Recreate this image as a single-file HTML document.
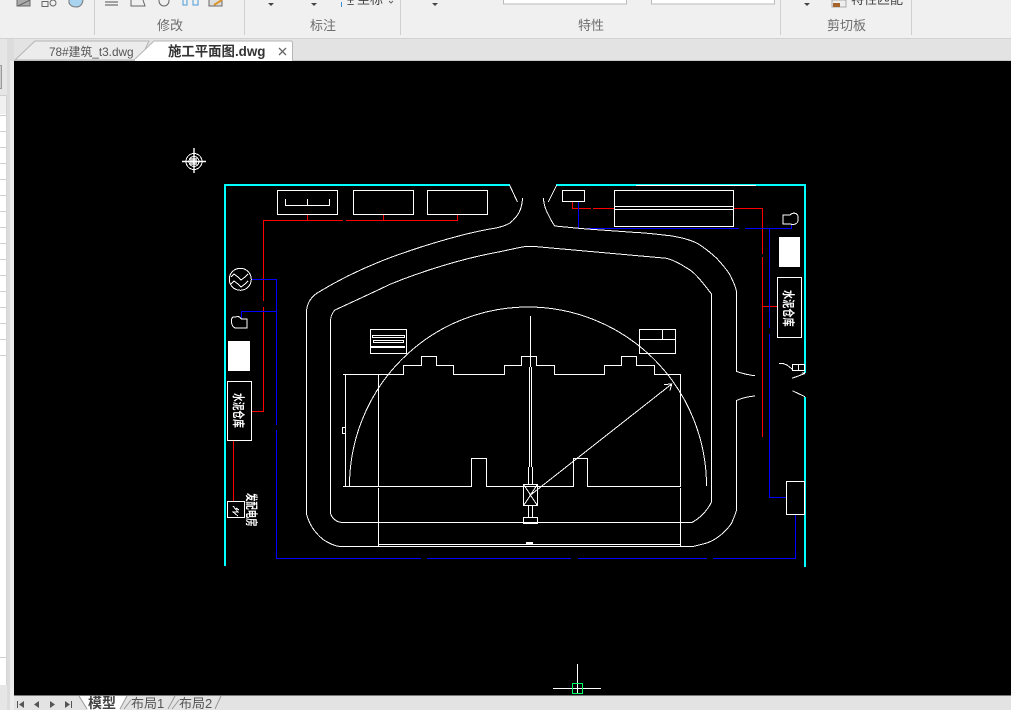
<!DOCTYPE html>
<html><head><meta charset="utf-8">
<style>
html,body{margin:0;padding:0;width:1011px;height:710px;overflow:hidden;background:#f0f0f0}
svg{display:block;position:absolute;left:0;top:0}
text{font-family:"Liberation Sans","Noto Sans CJK SC",sans-serif}
</style></head><body>
<svg width="1011" height="710" viewBox="0 0 1011 710" xmlns="http://www.w3.org/2000/svg">
<!-- ribbon -->
<rect width="1011" height="38" fill="#f0f0f0"/>
<rect y="38" width="1011" height="1" fill="#d2d2d2"/>
<rect y="39" width="1011" height="21" fill="#e3e3e3"/>
<rect y="60" width="1011" height="1" fill="#c8c8c8"/>
<g fill="#cfcfcf">
<rect x="94" y="0" width="1" height="35"/><rect x="244" y="0" width="1" height="35"/><rect x="400" y="0" width="1" height="35"/><rect x="780" y="0" width="1" height="35"/><rect x="911" y="0" width="1" height="35"/>
</g>
<!-- cut-off ribbon icons -->
<g fill="none" stroke="#666" stroke-width="1">
<path d="M17 0V6H30V0" fill="#aaa"/><path d="M18 6L30 0"/>
<rect x="42" y="1.500" width="6" height="5"/><circle cx="53" cy="3" r="3"/>
<path d="M69 0V3Q71 7 76 7Q82 7 83 0" fill="#a8d4f0" stroke="#777"/>
<path d="M105 2H118M105 5H118" stroke="#555"/><path d="M131 0V6H145L143 0"/><circle cx="164" cy="1" r="5"/>
<path d="M183 0V5H187V0M193 0V5H198V0" stroke="#4a9ad8"/>
<rect x="209" y="-2" width="13" height="8" fill="#ddd"/><path d="M214 5L222 0" stroke="#d9942c" stroke-width="2"/>
</g>
<g fill="#444">
<path d="M268 3h6l-3 3z"/><path d="M311 3h6l-3 3z"/><path d="M432 3h6l-3 3z"/><path d="M804 3h6l-3 3z"/>
</g>
<path d="M341 2h1v5h-1zM341 -1h1v1h-1z" fill="#3b8ed0"/>
<text x="347" y="5" font-size="13" fill="#444">±</text>
<text x="357" y="4" font-size="13" fill="#444">坐标</text>
<path d="M389 1l2 2 2-2" fill="none" stroke="#666"/>
<rect x="503.500" y="-3" width="123" height="7" fill="#fff" stroke="#bbb"/>
<rect x="651.500" y="-3" width="123" height="7" fill="#fff" stroke="#bbb"/>
<rect x="832" y="0" width="14" height="7" fill="#eee" stroke="#aaa"/>
<rect x="833" y="3" width="7" height="4" fill="#a5642a"/>
<text x="851" y="4" font-size="13" fill="#444">特性匹配</text>
<g font-size="13" fill="#6d6d6d">
<text x="157" y="30">修改</text><text x="310" y="30">标注</text><text x="578" y="30">特性</text><text x="827" y="30">剪切板</text>
</g>
<!-- tabs -->
<path d="M15 60L35 41H149L140 60Z" fill="#ececec" stroke="#b5b5b5"/>
<path d="M134 60L154 41H291Q292.500 41 292.500 43V60Z" fill="#fff" stroke="#b5b5b5"/>
<rect x="135" y="59" width="157" height="2" fill="#fff"/>
<text x="49" y="56" font-size="11.800" fill="#555">78#建筑_t3.dwg</text>
<text x="168" y="56" font-size="13.400" font-weight="bold" fill="#333">施工平面图.dwg</text>
<path d="M279 48L286 55M286 48L279 55" stroke="#666" stroke-width="1.300"/>
<!-- left panel -->
<rect y="39" width="14" height="671" fill="#e6e6e6"/>
<rect x="7" y="39" width="7" height="671" fill="#dcdcdc"/>
<rect x="10" y="61" width="4" height="649" fill="#ececec"/>
<rect x="0" y="65.500" width="1.500" height="23" fill="#fff" stroke="#999"/>
<rect x="0" y="95" width="7" height="590" fill="#fff"/>
<rect x="0" y="96" width="7" height="18" fill="#f0f0f0"/>
<g fill="#cfcfcf">
<rect x="0" y="95" width="7" height="1"/><rect x="0" y="115" width="7" height="1"/><rect x="0" y="131" width="7" height="1"/><rect x="0" y="147" width="7" height="1"/><rect x="0" y="163" width="7" height="1"/><rect x="0" y="179" width="7" height="1"/><rect x="0" y="195" width="7" height="1"/><rect x="0" y="211" width="7" height="1"/><rect x="0" y="227" width="7" height="1"/><rect x="0" y="243" width="7" height="1"/><rect x="0" y="259" width="7" height="1"/><rect x="0" y="275" width="7" height="1"/><rect x="0" y="291" width="7" height="1"/><rect x="0" y="307" width="7" height="1"/><rect x="0" y="323" width="7" height="1"/><rect x="0" y="339" width="7" height="1"/><rect x="0" y="355" width="7" height="1"/>
<rect x="0" y="657" width="7" height="1"/>
</g>
<rect x="6" y="95" width="1" height="590" fill="#d5d5d5"/>
<!-- canvas -->
<rect x="14" y="61" width="997" height="634" fill="#000"/>
<rect x="14" y="695" width="997" height="1" fill="#777"/>
<rect x="14" y="696" width="997" height="14" fill="#e3e3e3"/>
<!-- bottom tabs -->
<g fill="#555"><rect x="17" y="701" width="1" height="7"/><path d="M24 701v7l-5-3.500z"/><path d="M39 701v7l-5-3.500z"/><path d="M50 701v7l5-3.500z"/><path d="M65 701v7l5-3.500z"/><rect x="71" y="701" width="1" height="7"/></g>
<path d="M79 696L88 710H120L127 696Z" fill="#fff"/>
<g fill="none" stroke="#999"><path d="M79 696L87 709"/><path d="M127 696L120 709"/><path d="M131 700L124 709"/><path d="M175 696L168 709"/><path d="M179 700L172 709"/><path d="M221 696L215 709"/></g>
<text x="88" y="708" font-size="14" font-weight="bold" fill="#444">模型</text>
<text x="131" y="708" font-size="13" fill="#555">布局1</text>
<text x="179" y="708" font-size="13" fill="#555">布局2</text>
<!-- crosshair -->
<path d="M577.500 664V694M553 688.500H601" stroke="#fff" fill="none" shape-rendering="crispEdges"/>
<rect x="572.500" y="683.500" width="10" height="10" fill="none" stroke="#00ff66" shape-rendering="crispEdges"/>
<!-- cyan frame -->
<g fill="#00ffff">
<rect x="224" y="184" width="2" height="382"/>
<rect x="224" y="184" width="286" height="2"/>
<rect x="556" y="184" width="250" height="2"/>
<rect x="804" y="184" width="2" height="189"/>
<rect x="804" y="397" width="2" height="170"/>
</g>
<rect x="636" y="185" width="120" height="1" fill="#fff"/>
<!-- red -->
<g fill="none" stroke="#ff0000" stroke-width="1" shape-rendering="crispEdges">
<path d="M263.500 301V220.500H343M346 220.500H457.500V214"/>
<path d="M307.500 214V220M383.500 214V220"/>
<path d="M263.500 307V411.500H251"/>
<path d="M233.500 440V501"/>
<path d="M572.500 201V208.500H591M593 208.500H614"/>
<path d="M734 208.500H762.500V254"/>
<path d="M762.500 257V437"/>
<path d="M762.500 306.500H778"/>
</g>
<!-- blue -->
<g fill="none" stroke="#0000ff" stroke-width="1" shape-rendering="crispEdges">
<path d="M252 279.500H276.500V425"/>
<path d="M241.500 318V311.500H276.500"/>
<path d="M276.500 430V558.500H421"/>
<path d="M427 558.500H571M578 558.500H707M713 558.500H795.500V515"/>
<path d="M578.500 202V228.500H582M587 228.500H739M745 228.500H791.500V224"/>
<path d="M769.500 228V328M769.500 334V497.500H787"/>
</g>
<!-- white drawing -->
<g fill="none" stroke="#fff" stroke-width="1" shape-rendering="crispEdges">
<rect x="277.500" y="190.500" width="60" height="24"/>
<rect x="353.500" y="190.500" width="60" height="24"/>
<rect x="427.500" y="190.500" width="60" height="24"/>
<path d="M285.500 199V205.500H329.500V199M307.500 199V205"/>
<rect x="562.500" y="190.500" width="22" height="11"/>
<rect x="614.500" y="190.500" width="119" height="36"/>
<path d="M614 206.500H734M614 209.500H734"/>
<rect x="777.500" y="277.500" width="24" height="60"/>
<rect x="227.500" y="381.500" width="24" height="59"/>
<rect x="227.500" y="501.500" width="17" height="16"/>
<path d="M233 506L238 512L233 512L238 516M236 508L239 510"/>
<rect x="786.500" y="481.500" width="18" height="33"/>
<rect x="792.500" y="364.500" width="12" height="6"/>
<path d="M798.500 364V370"/>
<!-- building -->
<path d="M343 374.500H403.500V365.500H421.500V356.500H436.500V365.500H453.500V374.500H504.500V365.500H521.500V356.500H536.500V365.500H554.500V374.500H604.500V365.500H621.500V356.500H636.500V365.500H654.500V374.500H680.500V486.500H587.500V458.500H573.500V486.500H486.500V458.500H471.500V486.500H343"/>
<path d="M345.500 374V487M378.500 374V486M378.500 488V546M680.500 488V546"/>
<path d="M378 544.500H680"/>
<rect x="342.500" y="427.500" width="3" height="6"/>
<rect x="370.500" y="329.500" width="36" height="24"/>
<rect x="372.500" y="335.500" width="32" height="2"/>
<rect x="373.500" y="340.500" width="30" height="2"/>
<rect x="639.500" y="329.500" width="36" height="24"/>
<path d="M640 339.500H675M662.500 330V339"/>
<!-- crane -->
<path d="M530.500 316V367M529.500 367V467M531.500 367V467M528.500 467V484M532.500 467V484M528.500 505V517M532.500 505V517"/>
<rect x="523.500" y="484.500" width="14" height="21"/>
<rect x="523.500" y="517.500" width="14" height="6"/>
</g>
<rect x="526" y="542" width="7" height="2" fill="#fff"/>
<rect x="371" y="346" width="34" height="2" fill="#fff"/>
<rect x="228" y="341" width="22" height="30" fill="#fff"/>
<rect x="779" y="237" width="21" height="30" fill="#fff"/>
<g fill="none" stroke="#fff" stroke-width="1" shape-rendering="crispEdges">
<path d="M524 485L537 505M537 485L524 505"/>
<path d="M530.500 495L671.700 384M664 384.500L671.700 384L670 390.500"/>
<!-- arc -->
<path d="M349.500 486A178.500 179 0 0 1 706.500 486"/>
<!-- outer road -->
<path d="M509.500 185L517.500 202M522.500 198C522 211 517 217 510 223C505 226 500 227 496 228C470 232 430 243 390 257.700C360 269 335 282 316.700 293.300C310 298 306.500 305 306.500 312V514C309 523 313 531 323 539.500C330 544 335 546 340 546.500H693C703 544 710 543 716.700 538C724 533 729 527 731.700 523C734 517 736 513 736.500 510V400.500C742 398 748 396.500 755 396"/>
<path d="M556.700 185L548.300 202M543.300 198C544 206 546 211 549 216C551 220 553 224 555 226C565 227 575 228 587 229L633 232.300C650 233 662 235 670 235.700C685 238 694 241 700 245C706 249 712 254 716.700 258.300C722 264 727 270 730 275C733 281 736 287 736.500 292V371.500C741 373 748 375 755 375.700"/>
<!-- inner road -->
<path d="M330.500 513.500C332 518 336 522 342 522.500H692C700 518 707 511 711.500 502V294C703 283 696 274 690 270C682 265 676 261 666.700 258.300L540 247C532 246 526 246 520 247.500C512 249 506 250.500 500 251.700C465 258 425 270 390 284.300C370 294 350 303 335 310C331 314 330.500 318 330.500 322V513.500"/>
<!-- right little curves -->
<path d="M779 363.300C783 363 785 364 787 365M792 369L787 365"/>
<path d="M801.700 373.300L805 372.500M792 378.300L805 373.500M792.300 390.700L805 396.700"/>
<!-- symbols -->
<circle cx="240.300" cy="279.300" r="11"/>
<path d="M231 277L234 274L238 277L241 280L245 277L248 274M231 284L234 281L238 284L241 287L245 284L248 281"/>
<path d="M233 317H236C238 316 240 317 241.500 319H247V328H238C234 329 232 326 231.500 322C231 320 232 318 233 317Z"/>
<path d="M783 215H790C793 212 797 213 798 216V221C797 224 794 225 790 224H783Z"/>
<circle cx="194" cy="161.500" r="8"/>
<circle cx="194" cy="161.500" r="5"/>
</g>
<path d="M194 148V173M182 161.500H206" stroke="#fff" stroke-width="1.400"/>
<rect x="190" y="158" width="7" height="7" fill="#fff" opacity=".7"/>
<g fill="#fff" font-size="11.200" font-weight="bold">
<text transform="translate(234 393) rotate(90) scale(.78 1.100)">水泥仓库</text>
<text transform="translate(784 290) rotate(90) scale(.82 1.100)">水泥仓库</text>
<text transform="translate(247 493) rotate(90) scale(.75 1.100)">发配电房</text>
</g>
</svg>
</body></html>
